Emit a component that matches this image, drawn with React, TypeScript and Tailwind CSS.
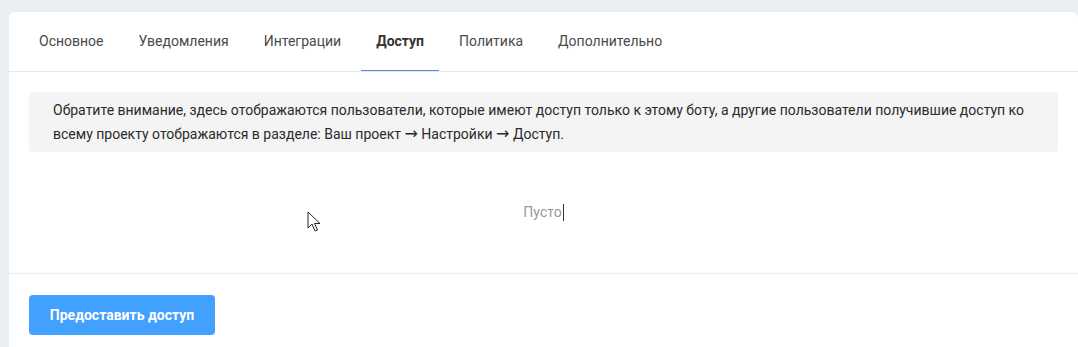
const tabs = ['Основное', 'Уведомления', 'Интеграции', 'Доступ', 'Политика', 'Дополнительно']

function Arrow() {
  return <span className="font-['DejaVu_Sans',sans-serif] text-[16px] leading-[0]">→</span>
}

function Cursor() {
  return (
    <svg
      className="absolute left-[307px] top-[211px]"
      width="14"
      height="22"
      viewBox="0 0 14 22"
    >
      <path
        d="M1 1 L1 17 L5 13 L8 20 L10.5 19 L7.5 12.5 L13 12.5 Z"
        fill="#fff"
        stroke="#222"
        strokeWidth="1"
        strokeLinejoin="round"
      />
    </svg>
  )
}

export default function App() {
  return (
    <div
      className="relative min-h-[347px] bg-[#eceff1] pl-[9px] pt-[12px]"
      style={{ fontFamily: 'Roboto, "Noto Sans", sans-serif' }}
    >
      <div className="rounded-tl-[6px] rounded-tr-[6px] bg-white">
        <div className="flex h-[60px] border-b border-[#e8e8e8] pl-[15px]">
          {tabs.map((t) => {
            const active = t === 'Доступ'
            return (
              <div
                key={t}
                className={
                  active
                    ? 'mr-[5px] flex h-[59px] items-center border-b-[1.5px] border-[#4a8fe0] px-[15px] text-[14px] font-bold text-[#333]'
                    : 'mr-[5px] flex h-[59px] items-center px-[15px] text-[14px] text-[#4a4a4a]'
                }
              >
                {t}
              </div>
            )
          })}
        </div>

        <div className="px-[20px] pt-[20px]">
          <div className="h-[60px] rounded-[4px] bg-[#f4f4f4] px-[24px] py-[6px] text-[14px] leading-[24px] text-[#2b2b2b]">
            Обратите внимание, здесь отображаются пользователи, которые имеют доступ только к этому боту, а другие
            пользователи получившие доступ ко всему проекту отображаются в разделе: Ваш проект <Arrow /> Настройки{' '}
            <Arrow /> Доступ.
          </div>
          <div className="flex h-[121px] items-center justify-center text-[14px] text-[#999]">
            <span>Пусто</span>
            <span className="ml-px h-[17px] w-px bg-[#333]" />
          </div>
        </div>

        <div className="border-t border-[#ececec] px-[20px] pb-[20px] pt-[21px]">
          <button className="h-[40px] w-[186px] rounded-[4px] bg-[#42a0ff] text-[14px] font-bold text-white">
            Предоставить доступ
          </button>
        </div>
      </div>
      <Cursor />
    </div>
  )
}
